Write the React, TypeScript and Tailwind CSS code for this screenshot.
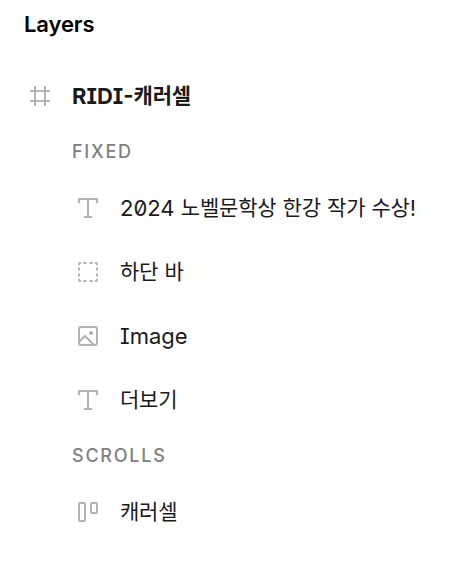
import type { ReactNode } from "react";

type IconName = "frame" | "text" | "group" | "image" | "autoLayout";

interface Layer {
  name: string;
  icon: IconName;
}

const fixedLayers: Layer[] = [
  { name: "2024 노벨문학상 한강 작가 수상!", icon: "text" },
  { name: "하단 바", icon: "group" },
  { name: "Image", icon: "image" },
  { name: "더보기", icon: "text" },
];

const scrollLayers: Layer[] = [{ name: "캐러셀", icon: "autoLayout" }];

const icons: Record<IconName, ReactNode> = {
  frame: <path d="M7 2v20M17 2v20M2 7h20M2 17h20" />,
  text: <path d="M3 7V3h18v4M12 3v18M8 21h8" />,
  group: (
    <path d="M3 5V4a1 1 0 0 1 1-1h1M7.5 3h3M13.5 3h3M19 3h1a1 1 0 0 1 1 1v1M21 7.5v3M21 13.5v3M21 19v1a1 1 0 0 1-1 1h-1M16.5 21h-3M10.5 21h-3M5 21H4a1 1 0 0 1-1-1v-1M3 16.5v-3M3 10.5v-3" />
  ),
  image: (
    <>
      <rect x="3" y="3" width="18" height="18" rx="2" />
      <path d="M3 18l6-6 9 9" />
      <circle cx="15" cy="9" r="2" fill="currentColor" stroke="none" />
    </>
  ),
  autoLayout: (
    <>
      <rect x="3" y="3" width="6" height="18" rx="1" />
      <rect x="15" y="3" width="6" height="10" rx="1" />
    </>
  ),
};

function LayerIcon({ name }: { name: IconName }) {
  return (
    <svg className="h-6 w-6 shrink-0 text-[#b3b3b3]" viewBox="0 0 24 24" fill="none" stroke="currentColor" strokeWidth={2}>
      {icons[name]}
    </svg>
  );
}

// Hangul runs are set slightly smaller so they sit evenly next to the latin text
function LayerName({ children }: { children: string }) {
  return (
    <span className="whitespace-nowrap text-[22px] leading-8 [font-feature-settings:'ss02','zero','cv08']">
      {children.split(/([가-힣]+)/).map((part, i) =>
        i % 2 === 1 ? (
          <span key={i} className="align-[1px] text-[21px] leading-none tracking-[-0.2px]">
            {part}
          </span>
        ) : (
          part
        )
      )}
    </span>
  );
}

function LayerRow({ layer }: { layer: Layer }) {
  return (
    <div className="flex h-16 items-center gap-5 pl-[76px]">
      <LayerIcon name={layer.icon} />
      <LayerName>{layer.name}</LayerName>
    </div>
  );
}

function SectionLabel({ children }: { children: ReactNode }) {
  return (
    <h3 className="flex h-12 items-center pb-0.5 pl-[72px] text-[18px] font-medium tracking-[1.75px] text-[#808080]">
      {children}
    </h3>
  );
}

export default function App() {
  return (
    <div className="h-[562px] overflow-hidden bg-white font-[Inter,'Noto_Sans_CJK_KR',sans-serif] text-[#1a1a1a]">
      <h2 className="flex h-12 items-center pl-6 text-[22px] font-semibold tracking-[-0.1px] text-black">Layers</h2>
      <div className="mt-4 flex h-16 items-center gap-5 pl-7 font-bold">
        <LayerIcon name="frame" />
        <LayerName>RIDI-캐러셀</LayerName>
      </div>
      <SectionLabel>FIXED</SectionLabel>
      {fixedLayers.map((layer) => (
        <LayerRow key={layer.name} layer={layer} />
      ))}
      <SectionLabel>SCROLLS</SectionLabel>
      {scrollLayers.map((layer) => (
        <LayerRow key={layer.name} layer={layer} />
      ))}
    </div>
  );
}
